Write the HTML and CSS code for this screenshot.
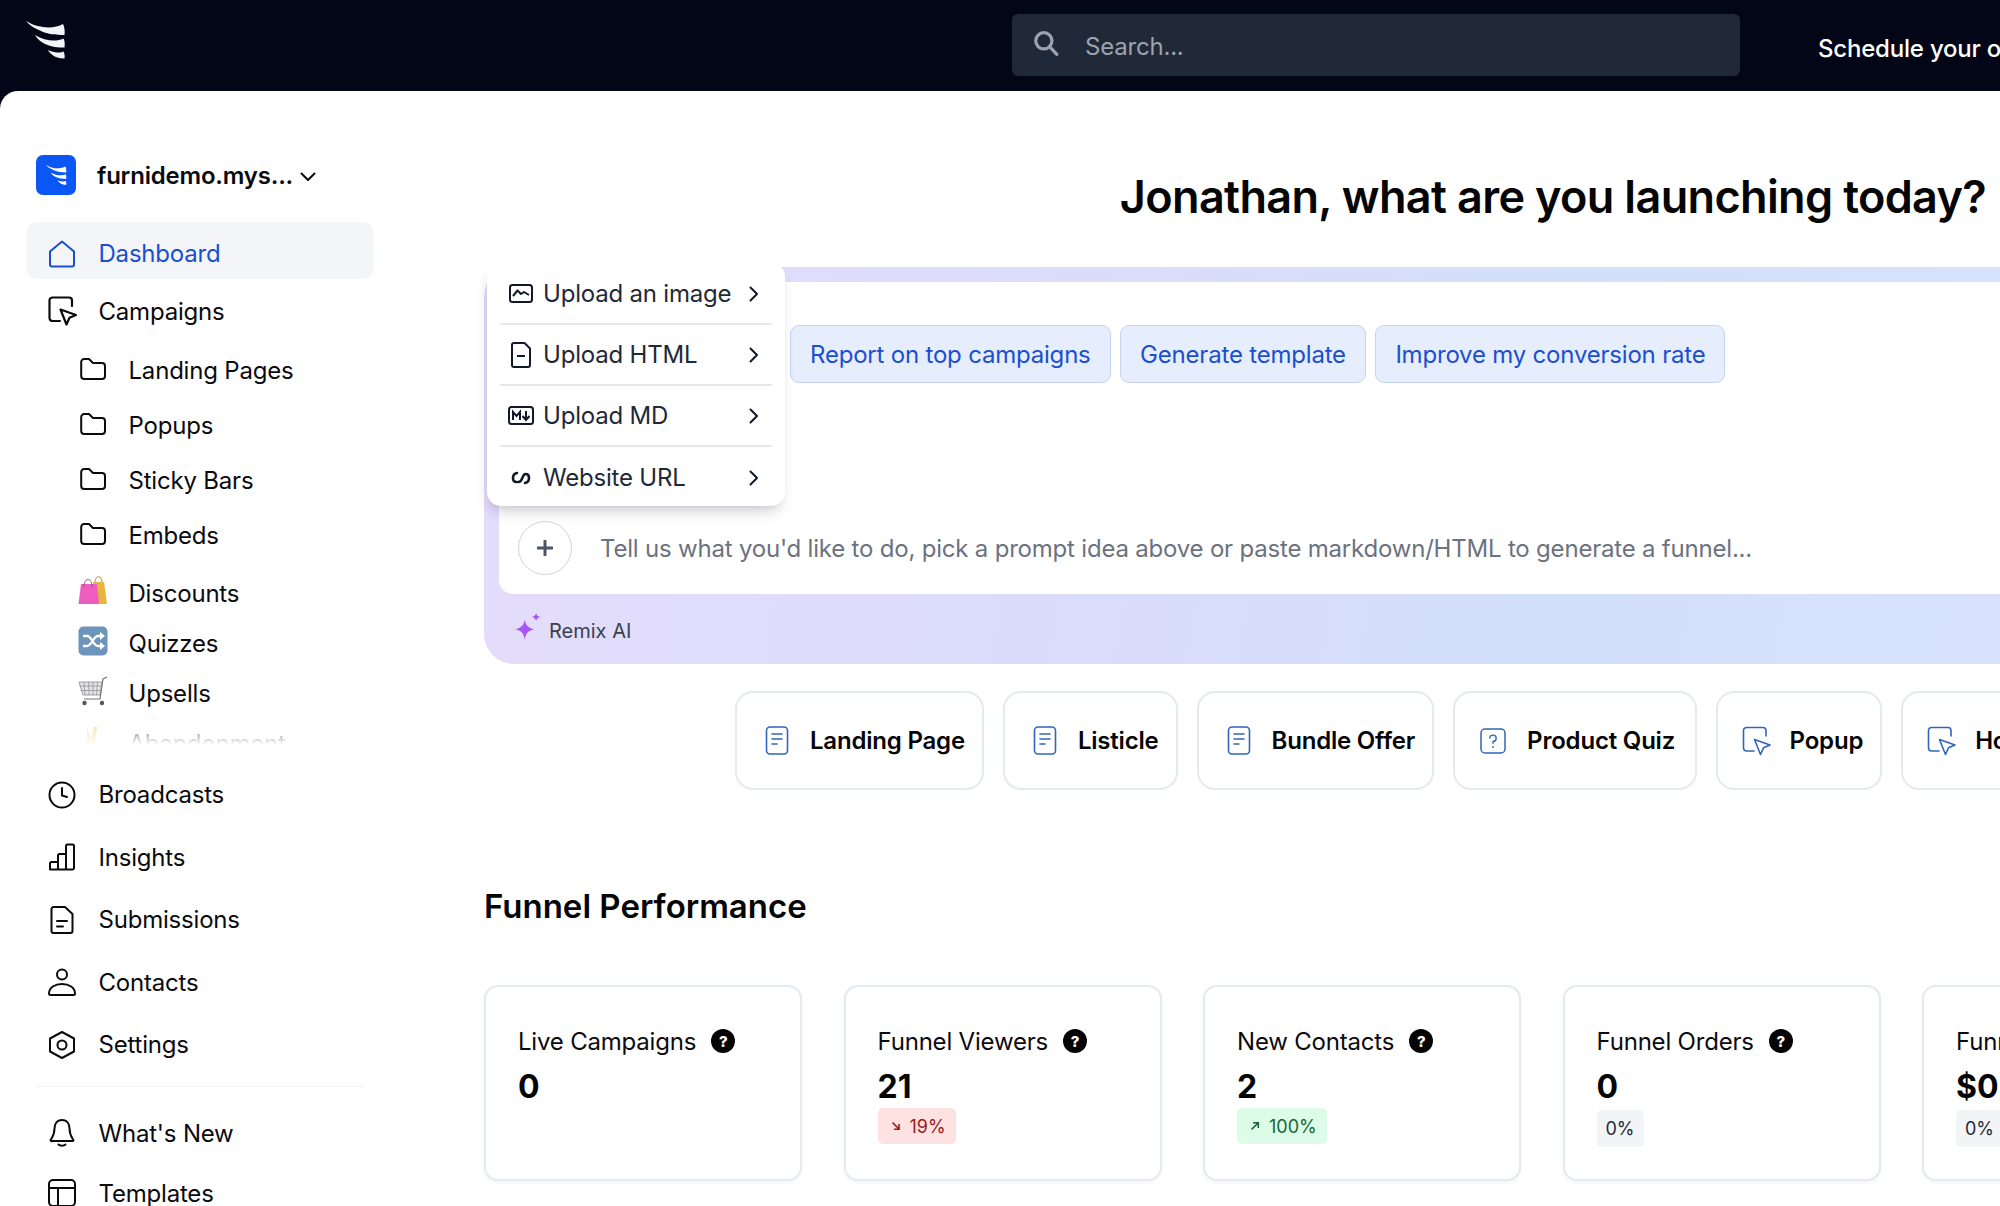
FILE: index.html
```html
<!DOCTYPE html>
<html lang="en">
<head>
<meta charset="utf-8">
<title>Dashboard</title>
<link rel="stylesheet" href="styles.css">
</head>
<body>
<svg class="defs" aria-hidden="true">
  <symbol id="i-logo" viewBox="0 0 40 38"><path d="M0 0C7 4 11 5 17 6C24 7 32 6 37 3C38.500 6 39 10 38.500 14C30 14 22 13.500 15 10C8 7 3 4 0 0Z"/><path d="M9 14C15 18 22 19.500 28 19.500C31 19.500 34.500 19 37.500 17.500C38.800 20 39 23 38.500 26.500C32 26.500 25 26 19 23C15 21 11 18 9 14Z"/><path d="M22 29C26 31 30 31.500 33 31.500C35 31.500 36.500 31 37.500 30.500C38.500 32.500 39 35 38.500 37.500C33 37.500 29 36 26.500 34C24.500 32.500 23 31 22 29Z"/></symbol>
  <symbol id="i-folder" viewBox="0 0 26 22"><path d="M1.200 4A3 3 0 0 1 4.200 1H9L13 5H22A3 3 0 0 1 25 8V18A3 3 0 0 1 22 21H4.200A3 3 0 0 1 1.200 18Z" fill="none" stroke="currentColor" stroke-width="2" stroke-linejoin="round"/></symbol>
  <symbol id="i-chev" viewBox="0 0 10 16"><path d="M1.500 1.500L8 8L1.500 14.500" fill="none" stroke="currentColor" stroke-width="2" stroke-linecap="round" stroke-linejoin="round"/></symbol>
  <symbol id="i-doc" viewBox="0 0 24 29"><rect x="1.500" y="1" width="21" height="27" rx="3.500" fill="none" stroke="currentColor" stroke-width="1.600"/><path d="M7 8H17M7 13H17M7 18H12" fill="none" stroke="currentColor" stroke-width="1.600" stroke-linecap="round"/></symbol>
  <symbol id="i-cursor" viewBox="0 0 30 30"><path d="M12 25H4.500A3 3 0 0 1 1.500 22V4.500A3 3 0 0 1 4.500 1.500H21A3 3 0 0 1 24 4.500V10" fill="none" stroke="currentColor" stroke-width="1.600" stroke-linecap="round"/><path d="M12.500 13.500L28 19L21.500 21.800L18.500 28.500Z" fill="none" stroke="currentColor" stroke-width="1.600" stroke-linejoin="round"/></symbol>
  <symbol id="i-cursor-bold" viewBox="0 0 30 30"><path d="M12 25H4.500A3 3 0 0 1 1.500 22V4.500A3 3 0 0 1 4.500 1.500H21A3 3 0 0 1 24 4.500V10" fill="none" stroke="currentColor" stroke-width="2.200" stroke-linecap="round"/><path d="M12.500 13.500L28 19L21.500 21.800L18.500 28.500Z" fill="none" stroke="currentColor" stroke-width="2.200" stroke-linejoin="round"/></symbol>
</svg>

<header class="topbar">
  <svg class="logo-top"><use href="#i-logo"/></svg>
  <div class="search">
    <svg class="search-icon" viewBox="0 0 24 24"><circle cx="10" cy="10" r="7.500" fill="none" stroke="currentColor" stroke-width="3"/><path d="M15.500 15.500L22 22.500" stroke="currentColor" stroke-width="3" stroke-linecap="round"/></svg>
    <span>Search...</span>
  </div>
  <span class="schedule">Schedule your onboarding call</span>
</header>

<div class="shell">
  <aside class="sidebar">
    <div class="brand">
      <span class="brand-mark"><svg class="brand-logo"><use href="#i-logo"/></svg></span>
      <span class="brand-name">furnidemo.mys...</span>
      <svg class="brand-chev" viewBox="0 0 16 10"><path d="M1.500 1.500L8 8L14.500 1.500" fill="none" stroke="currentColor" stroke-width="2" stroke-linecap="round" stroke-linejoin="round"/></svg>
    </div>

    <a class="row row-active"><span class="row-ico"><svg class="ico" viewBox="0 0 28 28"><path d="M2 11.500L14 1.500L26 11.500V24.500A2 2 0 0 1 24 26.500H4A2 2 0 0 1 2 24.500Z" fill="none" stroke="currentColor" stroke-width="2" stroke-linejoin="round"/></svg></span>Dashboard</a>
    <a class="row row-campaigns"><span class="row-ico"><svg class="ico ico-stroke"><use href="#i-cursor-bold"/></svg></span>Campaigns</a>

    <div class="subnav">
      <a class="sub"><span class="row-ico"><svg class="folder"><use href="#i-folder"/></svg></span>Landing Pages</a>
      <a class="sub"><span class="row-ico"><svg class="folder"><use href="#i-folder"/></svg></span>Popups</a>
      <a class="sub"><span class="row-ico"><svg class="folder"><use href="#i-folder"/></svg></span>Sticky Bars</a>
      <a class="sub"><span class="row-ico"><svg class="folder"><use href="#i-folder"/></svg></span>Embeds</a>
      <a class="sub sub-emoji sub-first"><span class="row-ico"><svg class="emoji" viewBox="0 0 30 30"><path d="M15 6H26L29 28H18Z" fill="#e6b63c"/><path d="M17 6C17 -1 24 -1 24 6" fill="none" stroke="#b98f2a" stroke-width="1"/><path d="M3 8H19L21 28H0.500Z" fill="#ee5cc0"/><path d="M6 11C6 1 14 1 14 11" fill="none" stroke="#a8466f" stroke-width="1"/></svg></span>Discounts</a>
      <a class="sub sub-emoji"><span class="row-ico"><svg class="emoji" viewBox="0 0 30 30"><rect x="0.500" y="0.500" width="29" height="29" rx="5" fill="#6d94bb"/><path d="M5 10H9C14 10 15 20 20 20H24M5 20H9C14 20 15 10 20 10H24" fill="none" stroke="#fff" stroke-width="2.400"/><path d="M22 6L27 10L22 14ZM22 16L27 20L22 24Z" fill="#fff"/></svg></span>Quizzes</a>
      <a class="sub sub-emoji"><span class="row-ico"><svg class="emoji" viewBox="0 0 30 30"><path d="M1 6H24L22 19H5Z" fill="#e4e4e6" stroke="#8b8b90" stroke-width="0.800"/><path d="M6 6L7 19M10.500 6L11 19M15 6V19M19.500 6L18.500 19M1.500 10H23.500M2.500 14.500H23" stroke="#8b8b90" stroke-width="0.700"/><path d="M29 1L25 3L22 23H6" fill="none" stroke="#77777c" stroke-width="1.200"/><circle cx="6.500" cy="27" r="2.200" fill="#55555a"/><circle cx="24" cy="27" r="2.200" fill="#55555a"/></svg></span>Upsells</a>
      <a class="sub sub-emoji"><span class="row-ico"><svg class="emoji" viewBox="0 0 30 30"><path d="M9 2L13 14L16 1L19 1L17 16L22 18V28H8L6 16L9 15Z" fill="#f3cf74"/></svg></span>Abandonment</a>
    </div>

    <div class="nav-lower">
      <a class="row"><span class="row-ico"><svg class="ico" viewBox="0 0 28 28"><circle cx="14" cy="14" r="12.500" fill="none" stroke="currentColor" stroke-width="2"/><path d="M14 7V14.500L19 16" fill="none" stroke="currentColor" stroke-width="2" stroke-linecap="round"/></svg></span>Broadcasts</a>
      <a class="row"><span class="row-ico"><svg class="ico" viewBox="0 0 28 28"><path d="M2 26.500V20.500A1.500 1.500 0 0 1 3.500 19H10V26.500ZM10 26.500V12.500A1.500 1.500 0 0 1 11.500 11H18V26.500ZM18 26.500V3A1.500 1.500 0 0 1 19.500 1.500H24.500A1.500 1.500 0 0 1 26 3V25A1.500 1.500 0 0 1 24.500 26.500H3.500A1.500 1.500 0 0 1 2 25" fill="none" stroke="currentColor" stroke-width="2" stroke-linejoin="round"/></svg></span>Insights</a>
      <a class="row"><span class="row-ico"><svg class="ico" viewBox="0 0 28 28"><path d="M3.500 3A2 2 0 0 1 5.500 1H17L24.500 8V25A2 2 0 0 1 22.500 27H5.500A2 2 0 0 1 3.500 25Z" fill="none" stroke="currentColor" stroke-width="2" stroke-linejoin="round"/><path d="M9 15H19M9 20.500H15" stroke="currentColor" stroke-width="2" stroke-linecap="round"/></svg></span>Submissions</a>
      <a class="row"><span class="row-ico"><svg class="ico" viewBox="0 0 28 28"><circle cx="14" cy="6.500" r="5" fill="none" stroke="currentColor" stroke-width="2"/><path d="M1 25.500C1 19.500 7 16 14 16C21 16 27 19.500 27 25.500A1.500 1.500 0 0 1 25.500 27H2.500A1.500 1.500 0 0 1 1 25.500Z" fill="none" stroke="currentColor" stroke-width="2" stroke-linejoin="round"/></svg></span>Contacts</a>
      <a class="row"><span class="row-ico"><svg class="ico" viewBox="0 0 28 28"><path d="M14 1L26 7.500V20.500L14 27L2 20.500V7.500Z" fill="none" stroke="currentColor" stroke-width="2" stroke-linejoin="round"/><circle cx="14" cy="14" r="4.500" fill="none" stroke="currentColor" stroke-width="2"/></svg></span>Settings</a>
    </div>
    <div class="divider"></div>
    <a class="row row-foot"><span class="row-ico"><svg class="ico" viewBox="0 0 28 28"><path d="M14 1C8.500 1 6.500 5.500 6.500 9.500C6.500 15 4 19 3 20.500A.8.8 0 0 0 3.800 22H24.200A.8.8 0 0 0 25 20.500C24 19 21.500 15 21.500 9.500C21.500 5.500 19.500 1 14 1Z" fill="none" stroke="currentColor" stroke-width="2" stroke-linejoin="round"/><path d="M10.500 25.500C12 27 16 27 17.500 25.500" fill="none" stroke="currentColor" stroke-width="2" stroke-linecap="round"/></svg></span>What's New</a>
    <a class="row row-foot"><span class="row-ico"><svg class="ico" viewBox="0 0 28 28"><rect x="1" y="1" width="26" height="26" rx="4" fill="none" stroke="currentColor" stroke-width="2"/><path d="M1 9H27M10 9V27" stroke="currentColor" stroke-width="2"/></svg></span>Templates</a>
  </aside>

  <main class="main">
    <h1 class="headline">Jonathan, what are you launching today?</h1>

    <section class="prompt">
      <div class="prompt-inner">
        <div class="chips">
          <button class="chip">Report on top campaigns</button>
          <button class="chip">Generate template</button>
          <button class="chip">Improve my conversion rate</button>
        </div>
        <div class="composer">
          <span class="plus"><svg class="plus-icon" viewBox="0 0 16 16"><path d="M8 1V15M1 8H15" stroke="currentColor" stroke-width="3" stroke-linecap="round"/></svg></span>
          <span class="placeholder">Tell us what you'd like to do, pick a prompt idea above or paste markdown/HTML to generate a funnel...</span>
        </div>
      </div>
      <div class="remix">
        <svg class="sparkle" viewBox="0 0 26 26"><path d="M10 6C10.800 11 13 14 19 15C13 16 10.800 19 10 25C9.200 19 7 16 1 15C7 14 9.200 11 10 6Z" fill="#a855f7"/><path d="M20.500 0C20.800 2 22 3.200 24.500 3.700C22 4.200 20.800 5.400 20.500 7.500C20.200 5.400 19 4.200 16.500 3.700C19 3.200 20.200 2 20.500 0Z" fill="#a855f7"/></svg>
        <span>Remix AI</span>
      </div>

      <div class="menu">
        <div class="menu-row"><svg class="menu-ico" viewBox="0 0 26 26"><rect x="2" y="4" width="22" height="17" rx="2.500" fill="none" stroke="currentColor" stroke-width="2"/><path d="M5 15L9.500 9.500L13 13L16 11L21 14" fill="none" stroke="currentColor" stroke-width="2" stroke-linejoin="round"/></svg><span class="menu-label">Upload an image</span><svg class="menu-chev"><use href="#i-chev"/></svg></div>
        <div class="menu-row"><svg class="menu-ico" viewBox="0 0 26 26"><path d="M4 3A2 2 0 0 1 6 1H16.500L22 6.500V23A2 2 0 0 1 20 25H6A2 2 0 0 1 4 23Z" fill="none" stroke="currentColor" stroke-width="2" stroke-linejoin="round"/><path d="M9 14H17" stroke="currentColor" stroke-width="2"/></svg><span class="menu-label">Upload HTML</span><svg class="menu-chev"><use href="#i-chev"/></svg></div>
        <div class="menu-row"><svg class="menu-ico" viewBox="0 0 26 26"><rect x="1" y="4" width="24" height="17" rx="2.500" fill="none" stroke="currentColor" stroke-width="2"/><path d="M5 17V9L8.500 13L12 9V17" fill="none" stroke="currentColor" stroke-width="2"/><path d="M18 8V16M14.500 13L18 17L21.500 13" fill="none" stroke="currentColor" stroke-width="2"/></svg><span class="menu-label">Upload MD</span><svg class="menu-chev"><use href="#i-chev"/></svg></div>
        <div class="menu-row"><svg class="menu-ico" viewBox="0 0 26 26"><path d="M9 8C6.500 8.500 5 10.500 5 13C5 15.500 6.500 17 8.500 17M17 18C19.500 17.500 21 15.500 21 13C21 10.500 19.500 9 17.500 9C14 9 15 17 10.500 17" fill="none" stroke="currentColor" stroke-width="2.600" stroke-linecap="round"/></svg><span class="menu-label">Website URL</span><svg class="menu-chev"><use href="#i-chev"/></svg></div>
      </div>
    </section>

    <div class="templates">
      <a class="tpl"><svg class="tpl-doc"><use href="#i-doc"/></svg>Landing Page</a>
      <a class="tpl"><svg class="tpl-doc"><use href="#i-doc"/></svg>Listicle</a>
      <a class="tpl"><svg class="tpl-doc"><use href="#i-doc"/></svg>Bundle Offer</a>
      <a class="tpl tpl-quiz"><svg class="tpl-doc" viewBox="0 0 26 26"><rect x="1" y="1" width="24" height="24" rx="4" fill="none" stroke="currentColor" stroke-width="1.500"/><path d="M9.800 10A3.200 3.200 0 1 1 13 13.500V15.500" fill="none" stroke="currentColor" stroke-width="1.300" stroke-linecap="round"/><circle cx="13" cy="19" r="0.900" fill="currentColor"/></svg>Product Quiz</a>
      <a class="tpl tpl-cur"><svg class="tpl-cursor"><use href="#i-cursor"/></svg>Popup</a>
      <a class="tpl tpl-cur"><svg class="tpl-cursor"><use href="#i-cursor"/></svg>Hosted Form</a>
    </div>

    <h2 class="section-title">Funnel Performance</h2>

    <div class="stats">
      <article class="stat">
        <div class="stat-title">Live Campaigns<span class="help">?</span></div>
        <div class="stat-value">0</div>
      </article>
      <article class="stat">
        <div class="stat-title">Funnel Viewers<span class="help">?</span></div>
        <div class="stat-value">21</div>
        <span class="badge badge-down"><svg class="badge-arrow" viewBox="0 0 10 10"><path d="M1.500 1.500L8 8M8 3V8.300H3" fill="none" stroke="currentColor" stroke-width="1.600"/></svg>19%</span>
      </article>
      <article class="stat">
        <div class="stat-title">New Contacts<span class="help">?</span></div>
        <div class="stat-value">2</div>
        <span class="badge badge-up"><svg class="badge-arrow" viewBox="0 0 10 10"><path d="M1.500 8.500L8 2M3 1.700H8.300V7" fill="none" stroke="currentColor" stroke-width="1.600"/></svg>100%</span>
      </article>
      <article class="stat">
        <div class="stat-title">Funnel Orders<span class="help">?</span></div>
        <div class="stat-value">0</div>
        <span class="badge badge-flat">0%</span>
      </article>
      <article class="stat">
        <div class="stat-title">Funnel Revenue<span class="help">?</span></div>
        <div class="stat-value">$0</div>
        <span class="badge badge-flat">0%</span>
      </article>
    </div>
  </main>
</div>
</body>
</html>
```

FILE: styles.css
```css
* { box-sizing: border-box; }
html, body { margin: 0; height: 100%; }
body {
  width: 2000px;
  height: 1206px;
  overflow: hidden;
  display: flex;
  flex-direction: column;
  background: #020617;
  color: #0b0b0f;
  font-family: Inter, "Liberation Sans", sans-serif;
  font-size: 24px;
  letter-spacing: -0.2px;
}
a { color: inherit; text-decoration: none; }
.defs { position: absolute; width: 0; height: 0; }

/* Top bar */
.topbar {
  flex: none;
  height: 91px;
  display: flex;
  align-items: flex-start;
  background: #020617;
}
.logo-top { flex: none; width: 40px; height: 38px; margin: 21px 0 0 26px; fill: #f3f4f6; }
.search {
  flex: none;
  width: 728px;
  height: 62px;
  margin: 14px 0 0 946px;
  padding: 2px 0 0 21px;
  display: flex;
  align-items: center;
  background: #1f2937;
  border-radius: 6px;
  color: #9ca3af;
}
.search-icon { flex: none; width: 26px; height: 26px; margin: -7px 26px 0 0; }
.schedule {
  flex: none;
  margin: 34px 0 0 78px;
  color: #fff;
  font-weight: 500;
  white-space: nowrap;
}

/* Shell */
.shell {
  flex: 1;
  min-height: 0;
  display: flex;
  overflow: hidden;
  background: #fff;
  border-radius: 18px 0 0 0;
}

/* Sidebar */
.sidebar { flex: none; width: 400px; padding: 64px 0 0 27px; overflow: hidden; }
.brand { display: flex; align-items: center; height: 40px; margin: 0 0 27px 9px; }
.brand-mark {
  flex: none;
  width: 40px;
  height: 40px;
  display: flex;
  align-items: center;
  justify-content: center;
  background: #0b57f5;
  border-radius: 7px;
}
.brand-logo { width: 21px; height: 20px; fill: #fff; }
.brand-name { margin-left: 21px; font-weight: 600; white-space: nowrap; }
.brand-chev { flex: none; width: 16px; height: 10px; margin: 3px 0 0 7px; }

.row {
  display: flex;
  align-items: center;
  width: 346px;
  height: 62.5px;
  padding-left: 21px;
  white-space: nowrap;
}
.row-ico { flex: none; width: 50.500px; display: flex; align-items: center; }
.ico { width: 28px; height: 28px; }
.ico-stroke { width: 30px; height: 30px; }
.row-active {
  height: 57px;
  padding-top: 6px;
  background: #f3f5f9;
  border-radius: 10px;
  color: #1b4fd0;
}
.row-campaigns { height: 56px; margin-top: 4px; }

.row-foot { height: 60px; }

.subnav { position: relative; height: 406px; padding-top: 4px; overflow: hidden; }
.subnav::after {
  content: "";
  position: absolute;
  left: 0;
  right: 0;
  bottom: 0;
  height: 22px;
  background: linear-gradient(to bottom, rgba(255, 255, 255, 0.35), #fff);
}
.sub {
  display: flex;
  align-items: center;
  height: 55px;
  padding-left: 51px;
  white-space: nowrap;
}
.sub-emoji { height: 50px; }
.sub-first { margin-top: 5px; }
.folder { width: 26px; height: 22px; margin: -3px 0 0 2px; }
.emoji { width: 30px; height: 30px; margin-top: -4px; }

.nav-lower { margin-top: 18.500px; }
.divider { width: 328px; height: 1px; margin: 10px 0 16px 9px; background: #eef0f3; }

/* Main */
.main { flex: none; width: 2222px; padding-left: 84px; }
.headline {
  margin: 78px 0 0;
  height: 56px;
  line-height: 56px;
  text-align: center;
  font-size: 45px;
  font-weight: 600;
  letter-spacing: -0.650px;
  color: #050505;
  white-space: nowrap;
}

.prompt {
  position: relative;
  height: 397px;
  margin-top: 42px;
  padding: 15px 0 0 15px;
  background: linear-gradient(100deg, #e5dcfb 0%, #dcdcfb 25%, #d3e0fb 50%, #dde4fb 100%);
  border-radius: 30px;
}
.prompt-inner {
  height: 312px;
  display: flex;
  flex-direction: column;
  background: #fff;
  border-radius: 14px;
}
.chips { display: flex; gap: 9.500px; padding: 43px 0 0 291px; }
.chip {
  flex: none;
  height: 58px;
  padding: 0 19px;
  background: #e6edfc;
  border: 1px solid #c5d4f3;
  border-radius: 9px;
  color: #1b4fd0;
  font: inherit;
  letter-spacing: inherit;
  white-space: nowrap;
}
.composer { display: flex; align-items: center; margin-top: 138px; padding-left: 19px; }
.plus {
  flex: none;
  width: 54px;
  height: 54px;
  display: flex;
  align-items: center;
  justify-content: center;
  border: 1.500px solid #d4d4d8;
  border-radius: 50%;
  color: #4b5563;
}
.plus-icon { width: 16px; height: 16px; }
.placeholder { margin-left: 28px; color: #6b7280; white-space: nowrap; }
.remix {
  display: flex;
  align-items: center;
  height: 69px;
  padding: 4px 0 0 15px;
  font-size: 20px;
  letter-spacing: 0;
  color: #374151;
}
.sparkle { flex: none; width: 28px; height: 28px; margin: -8px 7px 0 0; }

.menu {
  position: absolute;
  left: 3px;
  top: -4px;
  width: 298px;
  height: 243px;
  padding: 1px 13px 0 13px;
  background: #fff;
  border-radius: 14px;
  box-shadow: 0 10px 15px -3px rgba(0, 0, 0, 0.1), 0 4px 6px -4px rgba(0, 0, 0, 0.1), -4px 8px 14px -6px rgba(60, 60, 120, 0.12);
  color: #1f2937;
}
.menu-row {
  display: flex;
  align-items: center;
  height: 61px;
  padding-left: 8px;
  border-bottom: 2px solid #e5e9ee;
}
.menu-row:last-child { border-bottom: 0; }
.menu-ico { flex: none; width: 26px; height: 26px; margin-right: 9px; color: #111827; }
.menu-label { flex: 1; white-space: nowrap; }
.menu-chev { flex: none; width: 10px; height: 16px; margin-right: 13px; color: #111827; }

/* Template shortcuts */
.templates { display: flex; gap: 19px; margin: 27px 0 0 251px; }
.tpl {
  flex: none;
  height: 99px;
  display: flex;
  align-items: center;
  padding: 0 17px 0 28px;
  background: #fff;
  border: 2px solid #e5eaf0;
  border-radius: 18px;
  color: #050505;
  font-weight: 600;
  white-space: nowrap;
}
.tpl-doc { flex: none; width: 24px; height: 29px; margin-right: 21px; color: #3164bb; }
.tpl-quiz { padding: 0 19.500px 0 25px; }
.tpl-quiz .tpl-doc { width: 26px; height: 26px; margin-right: 21px; }
.tpl-cursor { flex: none; width: 30px; height: 30px; margin-right: 18px; color: #3164bb; }
.tpl-cur { padding-left: 24px; }

/* Stats */
.section-title {
  margin: 94px 0 0;
  height: 44px;
  line-height: 44px;
  font-size: 33px;
  font-weight: 600;
  letter-spacing: 0;
  color: #050505;
}
.stats { display: flex; gap: 41.500px; margin-top: 57px; }
.stat {
  flex: none;
  width: 318px;
  height: 196px;
  padding: 40px 0 0 32px;
  background: #fff;
  border: 2px solid #e5eaf0;
  border-radius: 14px;
  box-shadow: 0 2px 4px rgba(30, 41, 59, 0.05);
}
.stat-title { display: flex; align-items: center; height: 28px; white-space: nowrap; color: #0b0b0f; }
.help {
  flex: none;
  width: 24px;
  height: 24px;
  margin-left: 15px;
  display: flex;
  align-items: center;
  justify-content: center;
  background: #050505;
  border-radius: 50%;
  color: #fff;
  font-size: 15px;
  font-weight: 800;
}
.stat-value { height: 37px; margin-top: 13px; line-height: 37px; font-size: 32px; font-weight: 700; letter-spacing: 0; color: #050505; }
.badge {
  display: inline-flex;
  align-items: center;
  height: 36px;
  margin-top: 3px;
  padding: 0 10px 0 13px;
  border-radius: 5px;
  font-size: 18px;
  letter-spacing: 0;
}
.badge-arrow { flex: none; width: 10px; height: 10px; margin-right: 9px; }
.badge-down { background: #fee2e2; color: #991b1b; }
.badge-up { background: #dcfce7; color: #166534; }
.badge-flat { margin-top: 5px; padding: 0 9px; height: 37px; background: #f3f4f6; color: #1f2937; }
```
